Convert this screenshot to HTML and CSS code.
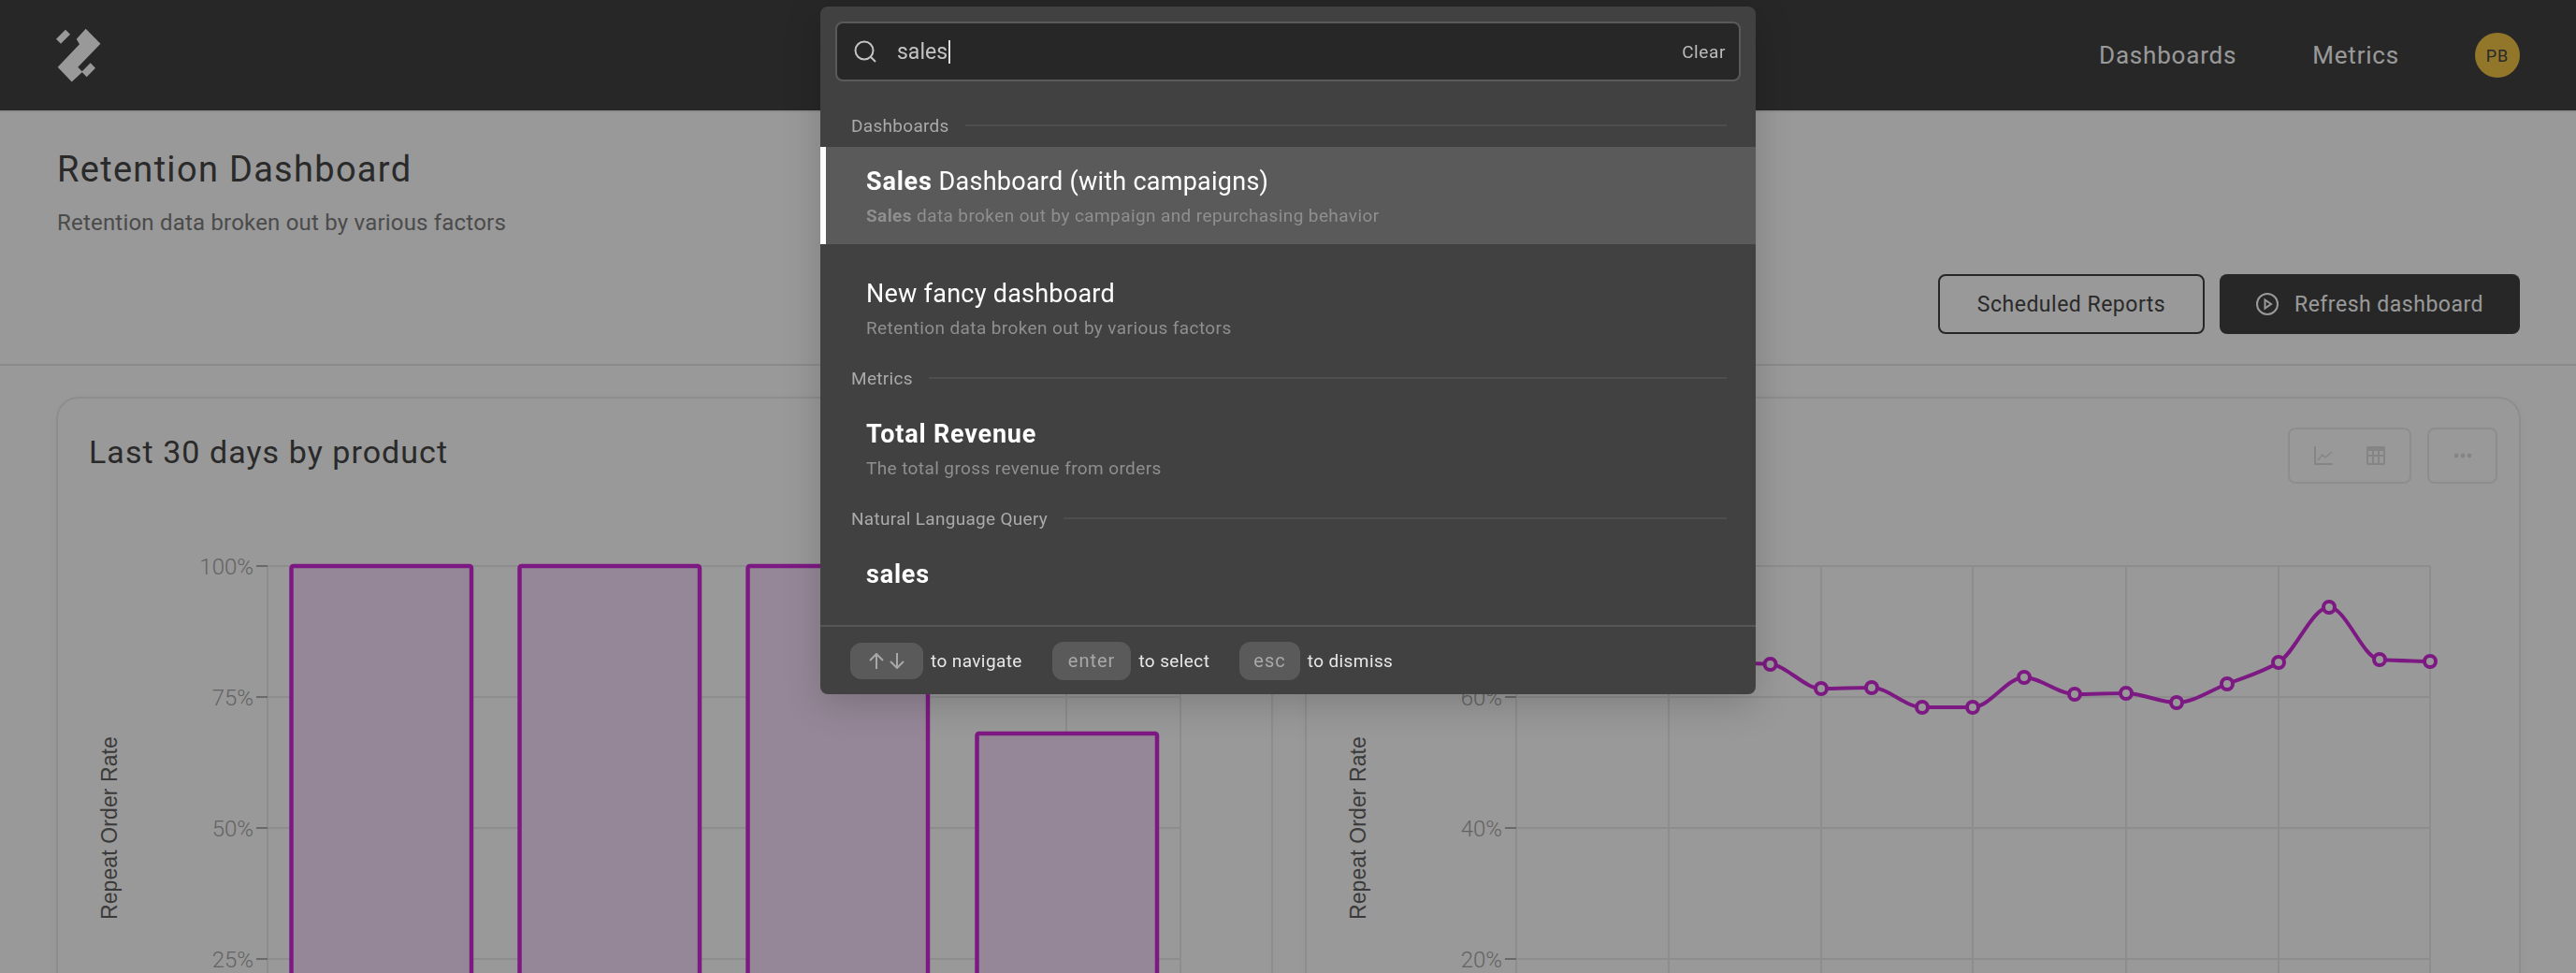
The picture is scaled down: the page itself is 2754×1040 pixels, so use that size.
FILE: index.html
```html
<html>
	<head>
		<title> Retention Dashboard </title>
		<link rel="stylesheet" href="styles.css">
	</head>
	<body>
		<div class="topbar">
			<svg class="logo" width="48" height="58" viewBox="60 30 48 58">
				<polygon points="91.7,30.7 107.5,46.7 83.3,71.7 88.3,76.7 76.7,87.5 61.7,71.7 85,47.3 81.7,41.7"/>
				<polygon points="70,31.7 75,36.7 65,46.7 60,41.7"/>
				<polygon points="96.7,67.3 102,72.7 92.7,82.3 87.3,76.7"/>
			</svg>
			<div class="nav">
				<a class="nav-link">Dashboards</a>
				<a class="nav-link">Metrics</a>
				<div class="avatar">PB</div>
			</div>
		</div>

		<div class="page-head">
			<div class="page-title">
				<h1>Retention Dashboard</h1>
				<p>Retention data broken out by various factors</p>
			</div>
			<div class="page-actions">
				<button class="btn btn-outline">Scheduled Reports</button>
				<button class="btn btn-dark">
					<svg width="24" height="24" viewBox="0 0 24 24" fill="none" stroke="currentColor" stroke-width="2">
						<circle cx="12" cy="12" r="11"/>
						<path d="M9.5 7.5 L16 12 L9.5 16.5 Z"/>
					</svg>
					Refresh dashboard
				</button>
			</div>
		</div>

		<div class="cards">
			<div class="card">
				<div class="card-head">
					<h2>Last 30 days by product</h2>
				</div>
				<svg class="chart" width="1296" height="480" viewBox="62 560 1296 480">
					<line class="grid" x1="286" y1="605" x2="286" y2="1040"/>
					<line class="grid" x1="408" y1="605" x2="408" y2="1040"/>
					<line class="grid" x1="652" y1="605" x2="652" y2="1040"/>
					<line class="grid" x1="896" y1="605" x2="896" y2="1040"/>
					<line class="grid" x1="1140" y1="605" x2="1140" y2="1040"/>
					<line class="grid" x1="1262" y1="605" x2="1262" y2="1040"/>
					<line class="grid" x1="286" y1="605" x2="1262" y2="605"/>
					<line class="grid" x1="286" y1="745" x2="1262" y2="745"/>
					<line class="grid" x1="286" y1="885" x2="1262" y2="885"/>
					<line class="grid" x1="286" y1="1025" x2="1262" y2="1025"/>
					<line class="tick" x1="274" y1="605" x2="286" y2="605"/>
					<line class="tick" x1="274" y1="745" x2="286" y2="745"/>
					<line class="tick" x1="274" y1="885" x2="286" y2="885"/>
					<line class="tick" x1="274" y1="1025" x2="286" y2="1025"/>
					<text class="tick-label" x="271" y="614">100%</text>
					<text class="tick-label" x="271" y="754">75%</text>
					<text class="tick-label" x="271" y="894">50%</text>
					<text class="tick-label" x="271" y="1034">25%</text>
					<text class="axis-label" transform="rotate(-90 125 885)" x="125" y="885">Repeat Order Rate</text>
					<rect class="bar" x="311.5" y="605" width="192.5" height="520" rx="2"/>
					<rect class="bar" x="555.5" y="605" width="192.5" height="520" rx="2"/>
					<rect class="bar" x="799.5" y="605" width="192.5" height="520" rx="2"/>
					<rect class="bar" x="1044.5" y="784" width="192.5" height="340" rx="2"/>
				</svg>
			</div>

			<div class="card">
				<div class="card-head">
					<h2>Last 30 days</h2>
					<div class="card-tools">
						<div class="tool tool-wide">
							<svg width="20" height="20" viewBox="0 0 20 20" fill="none" stroke="#dedede" stroke-width="2">
								<path d="M1 0 V19 H20"/>
								<path d="M4 15 L9 9 L12 12 L19 6" stroke-width="1.5"/>
							</svg>
							<svg width="20" height="20" viewBox="0 0 20 20">
								<rect width="20" height="20" rx="2" fill="#dedede"/>
								<rect x="2" y="5" width="4" height="4" fill="#fff"/>
								<rect x="8" y="5" width="4" height="4" fill="#fff"/>
								<rect x="14" y="5" width="4" height="4" fill="#fff"/>
								<rect x="2" y="11" width="4" height="7" fill="#fff"/>
								<rect x="8" y="11" width="4" height="7" fill="#fff"/>
								<rect x="14" y="11" width="4" height="7" fill="#fff"/>
							</svg>
						</div>
						<div class="tool">
							<svg width="20" height="6" viewBox="0 0 20 6" fill="#dedede">
								<circle cx="3" cy="3" r="2.4"/>
								<circle cx="10" cy="3" r="2.4"/>
								<circle cx="17" cy="3" r="2.4"/>
							</svg>
						</div>
					</div>
				</div>
				<svg class="chart" width="1297" height="480" viewBox="1396 560 1297 480">
					<line class="grid" x1="1620" y1="605" x2="1620" y2="1040"/>
					<line class="grid" x1="1783" y1="605" x2="1783" y2="1040"/>
					<line class="grid" x1="1946" y1="605" x2="1946" y2="1040"/>
					<line class="grid" x1="2108" y1="605" x2="2108" y2="1040"/>
					<line class="grid" x1="2272" y1="605" x2="2272" y2="1040"/>
					<line class="grid" x1="2435" y1="605" x2="2435" y2="1040"/>
					<line class="grid" x1="2597" y1="605" x2="2597" y2="1040"/>
					<line class="grid" x1="1620" y1="605" x2="2597" y2="605"/>
					<line class="grid" x1="1620" y1="745" x2="2597" y2="745"/>
					<line class="grid" x1="1620" y1="885" x2="2597" y2="885"/>
					<line class="grid" x1="1620" y1="1025" x2="2597" y2="1025"/>
					<line class="tick" x1="1608" y1="745" x2="1620" y2="745"/>
					<line class="tick" x1="1608" y1="885" x2="1620" y2="885"/>
					<line class="tick" x1="1608" y1="1025" x2="1620" y2="1025"/>
					<text class="tick-label" x="1605" y="754">60%</text>
					<text class="tick-label" x="1605" y="894">40%</text>
					<text class="tick-label" x="1605" y="1034">20%</text>
					<text class="axis-label" transform="rotate(-90 1459 885)" x="1459" y="885">Repeat Order Rate</text>
					<path class="series" d="M1837 708 C1855 708.7 1873.5 708.8 1891.6 710 C1909.7 711.2 1928 736 1946 736 C1964 736 1982 735 2000 735 C2018 735 2036 756 2054 756 C2072 756 2090 756 2108 756 C2126 756 2145 724 2163 724 C2181 724 2199 742 2217 742 C2235 742 2254 741 2272 741 C2290 741 2308 751 2326 751 C2344 751 2362 738 2380 731 C2398 723.9 2417 719 2435 708 C2453 697 2471 649 2489 649 C2507 649 2525 703.7 2543 705 C2561 706.3 2579 706.3 2597 707"/>
					<circle class="dot" cx="1891.6" cy="710" r="6"/>
					<circle class="dot" cx="1946" cy="736" r="6"/>
					<circle class="dot" cx="2000" cy="735" r="6"/>
					<circle class="dot" cx="2054" cy="756" r="6"/>
					<circle class="dot" cx="2108" cy="756" r="6"/>
					<circle class="dot" cx="2163" cy="724" r="6"/>
					<circle class="dot" cx="2217" cy="742" r="6"/>
					<circle class="dot" cx="2272" cy="741" r="6"/>
					<circle class="dot" cx="2326" cy="751" r="6"/>
					<circle class="dot" cx="2380" cy="731" r="6"/>
					<circle class="dot" cx="2435" cy="708" r="6"/>
					<circle class="dot" cx="2489" cy="649" r="6"/>
					<circle class="dot" cx="2543" cy="705" r="6"/>
					<circle class="dot" cx="2597" cy="707" r="6"/>
				</svg>
			</div>
		</div>

		<div class="overlay"></div>

		<div class="search-modal">
			<div class="search-wrap">
				<div class="search-box">
					<svg width="24" height="24" viewBox="0 0 24 24" fill="none" stroke="#c4c4c4" stroke-width="2">
						<circle cx="11" cy="11" r="9.5"/>
						<line x1="18" y1="18" x2="23" y2="23"/>
					</svg>
					<div class="search-text">sales</div>
					<div class="caret"></div>
					<div class="search-clear">Clear</div>
				</div>
			</div>

			<div class="group-label">Dashboards</div>
			<div class="result selected">
				<div class="result-title"><b>Sales</b> Dashboard (with campaigns)</div>
				<div class="result-sub"><b>Sales</b> data broken out by campaign and repurchasing behavior</div>
			</div>
			<div class="result second">
				<div class="result-title">New fancy dashboard</div>
				<div class="result-sub">Retention data broken out by various factors</div>
			</div>

			<div class="group-label">Metrics</div>
			<div class="result">
				<div class="result-title"><b>Total Revenue</b></div>
				<div class="result-sub">The total gross revenue from orders</div>
			</div>

			<div class="group-label">Natural Language Query</div>
			<div class="result plain">
				<div class="result-title"><b>sales</b></div>
			</div>

			<div class="search-foot">
				<div class="key key-arrows">
					<svg width="38" height="17" viewBox="0 0 38 17" fill="none" stroke="#a8a8a8" stroke-width="2">
						<path d="M8 17 V1 M1 8 L8 1 L15 8"/>
						<path d="M30 0 V16 M23 9 L30 16 L37 9"/>
					</svg>
				</div>
				<span class="hint">to navigate</span>
				<div class="key">enter</div>
				<span class="hint">to select</span>
				<div class="key key-esc">esc</div>
				<span class="hint">to dismiss</span>
			</div>
		</div>
	</body>
</html>
```

FILE: styles.css
```css
html{
	font-family: "Roboto", sans-serif;
}
body{
	margin: 0;
	height: 1040px;
	overflow: hidden;
	background: white;
	color: #464646;
}
h1,h2,p{
	margin: 0;
	font-weight: 400;
}

.topbar{
	height: 118px;
	padding: 0 60px;
	display: flex;
	align-items: center;
	justify-content: space-between;
	background: #414141;
	border-bottom: 2px solid #eeeeee;
}
.logo{
	fill: white;
}
.nav{
	display: flex;
	align-items: center;
	gap: 81px;
}
.nav-link{
	font-size: 26px;
	letter-spacing: 0.8px;
	color: white;
}
.avatar{
	width: 48px;
	height: 48px;
	border-radius: 50%;
	display: flex;
	align-items: center;
	justify-content: center;
	font-size: 18px;
	letter-spacing: 1px;
	background: #f3c546;
	color: #464646;
}

.page-head{
	height: 269px;
	padding: 0 60px;
	display: flex;
	justify-content: space-between;
	align-items: flex-end;
	border-bottom: 2px solid #e8e8e8;
}
.page-title{
	align-self: flex-start;
	padding-top: 39px;
	margin-left: 1px;
}
.page-title h1{
	font-size: 38px;
	line-height: 44px;
	letter-spacing: 1.3px;
}
.page-title p{
	margin-top: 21px;
	font-size: 24px;
	line-height: 28px;
	letter-spacing: 0.2px;
	color: #7e7e7e;
}
.page-actions{
	display: flex;
	gap: 16px;
	padding-bottom: 32px;
}
.btn{
	height: 64px;
	box-sizing: border-box;
	display: flex;
	align-items: center;
	gap: 17px;
	font-family: inherit;
	font-size: 23px;
	letter-spacing: 0.5px;
	border-radius: 8px;
}
.btn-outline{
	width: 285px;
	justify-content: center;
	background: white;
	color: #464646;
	border: 2px solid #414141;
}
.btn-dark{
	width: 321px;
	justify-content: center;
	background: #414141;
	color: white;
	border: none;
}

.cards{
	padding: 33px 59px 0 60px;
	display: grid;
	grid-template-columns: 1fr 1fr;
	gap: 34px;
}
.card{
	height: 760px;
	border: 2px solid #ececec;
	border-radius: 24px;
	box-shadow: 0 4px 12px rgba(0,0,0,0.03);
	overflow: hidden;
}
.card-head{
	height: 134px;
	padding: 31px 23px 0 33px;
	box-sizing: border-box;
	display: flex;
	justify-content: space-between;
	align-items: flex-start;
}
.card-head h2{
	font-size: 34px;
	line-height: 52px;
	letter-spacing: 1.05px;
	color: #464646;
}
.card-tools{
	display: flex;
	gap: 17px;
}
.tool{
	width: 75px;
	height: 60px;
	box-sizing: border-box;
	border: 2px solid #ececec;
	border-radius: 8px;
	display: flex;
	align-items: center;
	justify-content: center;
}
.tool-wide{
	width: 132px;
	gap: 36px;
}
.chart{
	display: block;
}

.grid{
	stroke: #ececec;
	stroke-width: 2;
}
.tick{
	stroke: #b0b0b0;
	stroke-width: 2;
}
.tick-label{
	font-size: 24px;
	font-weight: 300;
	fill: #a6a6a6;
	text-anchor: end;
}
.axis-label{
	font-family: "Liberation Sans", sans-serif;
	font-size: 23px;
	letter-spacing: 0.1px;
	fill: #626262;
	text-anchor: middle;
}
.bar{
	fill: #f8e1fc;
	stroke: #d02bd9;
	stroke-width: 4.5;
}
.series{
	fill: none;
	stroke: #d02bd9;
	stroke-width: 4;
}
.dot{
	fill: white;
	stroke: #d02bd9;
	stroke-width: 4;
}

.overlay{
	position: fixed;
	left: 0;
	top: 0;
	right: 0;
	bottom: 0;
	background: rgba(0,0,0,0.4);
}
.search-modal{
	position: absolute;
	left: 877px;
	top: 7px;
	width: 1000px;
	height: 735px;
	background: #414141;
	border-radius: 8px;
	box-shadow: 0 10px 40px rgba(0,0,0,0.18);
	overflow: hidden;
}
.search-wrap{
	padding: 16px 16px 24px;
}
.search-box{
	height: 64px;
	box-sizing: border-box;
	padding: 0 14px 0 18px;
	display: flex;
	align-items: center;
	background: #282728;
	border: 2px solid #5a5a5a;
	border-radius: 8px;
}
.search-text{
	margin-left: 22px;
	font-size: 23px;
	color: #c4c4c4;
}
.caret{
	width: 2px;
	height: 25px;
	margin-left: 1px;
	background: #dddddd;
}
.search-clear{
	margin-left: auto;
	font-size: 19px;
	letter-spacing: 0.6px;
	color: #bbbbbb;
}

.group-label{
	height: 30px;
	margin: 8px 31px 8px 33px;
	display: flex;
	align-items: center;
	gap: 17px;
	font-size: 19px;
	letter-spacing: 0.3px;
	color: #aaaaaa;
}
.group-label:after{
	content: "";
	flex: 1;
	height: 2px;
	background: #4e4e4e;
}
.result{
	padding: 19px 30px 16px 49px;
	box-sizing: border-box;
	height: 104px;
}
.result.selected{
	background: #5a5a5a;
	box-shadow: inset 6px 0 0 white;
}
.result.second{
	margin-top: 16px;
}
.result.plain{
	height: 91px;
}
.result-title{
	font-size: 27px;
	line-height: 36px;
	letter-spacing: 0.25px;
	color: white;
}
.result-title b{
	letter-spacing: 0.8px;
}
.result-sub{
	margin-top: 5px;
	font-size: 19px;
	line-height: 28px;
	letter-spacing: 0.4px;
	color: #8f8f8f;
}

.search-foot{
	height: 72px;
	padding-left: 32px;
	display: flex;
	align-items: center;
	border-top: 2px solid #565656;
}
.key{
	height: 41px;
	padding: 0 17px;
	display: flex;
	align-items: center;
	border-radius: 12px;
	background: #5a5a5a;
	font-size: 20px;
	letter-spacing: 1px;
	color: #a8a8a8;
}
.key-arrows{
	height: 39px;
	padding: 0 20px;
}
.key-esc{
	padding: 0 15px;
}
.hint{
	margin: 0 32px 0 8px;
	font-size: 19px;
	letter-spacing: 0.4px;
	color: #e8e8e8;
}
```
